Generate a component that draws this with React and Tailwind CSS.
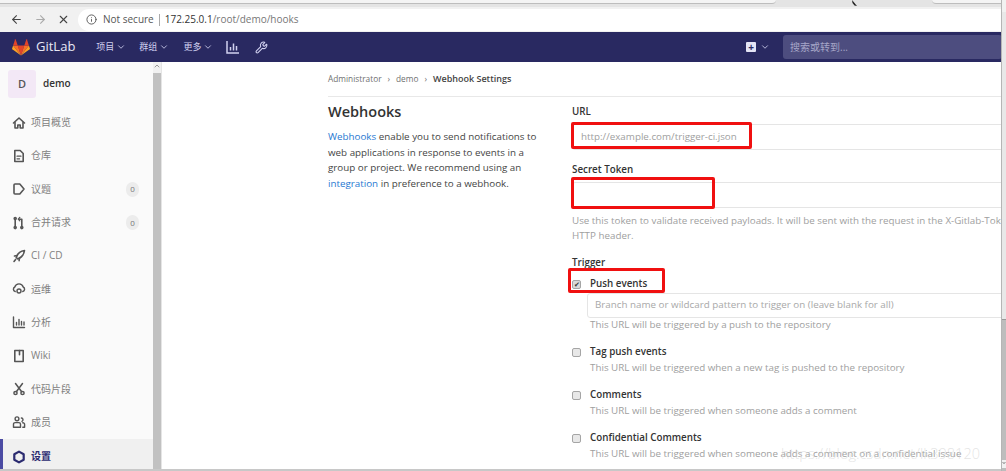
import React from "react";
import { ArrowLeft, ArrowRight, X, Info, ChevronDown, Wrench, ChevronUp } from "lucide-react";

const font = { fontFamily: '"Open Sans", "Noto Sans CJK SC", sans-serif' };

// gitlab's sidebar icons are heavier than lucide's, so they are drawn here
function Icon({ children, color = "#555", width = 1.6 }) {
  return (
    <svg width="14" height="14" viewBox="0 0 14 14" fill="none" stroke={color} strokeWidth={width} strokeLinejoin="round" strokeLinecap="round">
      {children}
    </svg>
  );
}

function Tanuki() {
  return (
    <svg width="18" height="17" viewBox="0 0 36 34">
      <path d="M18 33 24.6 12.8H11.4z" fill="#e24329" />
      <path d="M18 33 11.4 12.8H2.2z" fill="#fc6d26" />
      <path d="M2.2 12.8.2 19a1.4 1.4 0 0 0 .5 1.5L18 33z" fill="#fca326" />
      <path d="M2.2 12.8h9.2L7.4 1a.7.7 0 0 0-1.3 0z" fill="#e24329" />
      <path d="M18 33 24.6 12.8h9.2z" fill="#fc6d26" />
      <path d="M33.8 12.8l2 6.2a1.4 1.4 0 0 1-.5 1.5L18 33z" fill="#fca326" />
      <path d="M33.8 12.8h-9.2L28.6 1a.7.7 0 0 1 1.3 0z" fill="#e24329" />
    </svg>
  );
}

const navItems = [
  {
    label: "项目概览",
    icon: <Icon><path d="M1.5 7 7 2l5.5 5" /><path d="M3 6.5V12h2.8V9h2.4v3H11V6.5" /></Icon>,
  },
  {
    label: "仓库",
    icon: <Icon><path d="M2.8 1.5h5.4l3 3v8h-8.4z" /><path d="M5 7.2h4M5 9.8h2.6" strokeWidth="1.2" /></Icon>,
  },
  {
    label: "议题",
    icon: <Icon><path d="M7.8 2H3a1 1 0 0 0-1 1v8a1 1 0 0 0 1 1h4.8l4.2-5z" /></Icon>,
  },
  {
    label: "合并请求",
    icon: <Icon><path d="M3.2 3.5v7.5M9.8 5v6M7.6 3.2h2.2V5" /><path d="M7.8 1.5 6.2 3.2l1.6 1.6" strokeWidth="1.2" /><circle cx="3.2" cy="2.6" r="1" /><circle cx="3.2" cy="11.6" r="1" /><circle cx="9.8" cy="11.6" r="1" /></Icon>,
  },
  {
    label: "CI / CD",
    icon: <Icon><path d="M12.5 1.5C9 2 5.5 4.5 4.2 8.5l1.6 1.4c3.8-1.4 6.2-4.8 6.7-8.4z" /><path d="M5.2 6.5 2.5 7M7.5 9l-.4 2.6M3.6 10.4l-1.6 2" /></Icon>,
  },
  {
    label: "运维",
    icon: <Icon width={1.4}><path d="M3.2 9.5A2.4 2.4 0 0 1 2.8 5a4.4 4.4 0 0 1 8.4 0 2.4 2.4 0 0 1-.4 4.5" /><circle cx="7" cy="9" r="2" /></Icon>,
  },
  {
    label: "分析",
    icon: <Icon width={1.4}><path d="M1.5 2v10.5h11M4.5 7.5v2.5M7 4.5V10M9.5 6.5V10M12 7v3" /></Icon>,
  },
  {
    label: "Wiki",
    icon: <Icon><path d="M2.8 1.5h8.4v11H2.8z" /><path d="M7.5 1.5v4.2" /></Icon>,
  },
  {
    label: "代码片段",
    icon: <Icon width={1.5}><path d="M3.5 1.5 9.5 9.5M10.5 1.5 4.5 9.5" /><circle cx="3.5" cy="11" r="1.6" /><circle cx="10.5" cy="11" r="1.6" /></Icon>,
  },
  {
    label: "成员",
    icon: <Icon width={1.4}><circle cx="5" cy="3.8" r="1.9" /><path d="M1.5 12.2V9.2a1.6 1.6 0 0 1 1.6-1.6h3.8a1.6 1.6 0 0 1 1.6 1.6v3z" /><path d="M9.4 3a1.8 1.8 0 0 1 .6 3.4M10.8 12.2h1.8V9.4a1.6 1.6 0 0 0-1.8-1.6" /></Icon>,
  },
];

function Sidebar() {
  return (
    <div className="w-[153px] shrink-0 bg-[#fafafa] flex flex-col">
      <div className="flex items-center gap-[7px] pl-2 h-[44px]">
        <div className="w-[28px] h-[28px] rounded-[3px] bg-[#f3e8f6] flex items-center justify-center text-[11px] font-semibold text-[#555]">D</div>
        <span className="text-[10px] font-semibold text-[#333]">demo</span>
      </div>
      {navItems.map((item, i) => (
        <div key={item.label} className="h-[33.4px] flex items-center pl-3 pr-[14px]">
          <span className="w-[14px] flex justify-center">{item.icon}</span>
          <span className="ml-[5px] text-[10px] text-[#808080] flex-1">{item.label}</span>
          {(i === 2 || i === 3) && (
            <span className="w-[13px] h-[15px] rounded-full bg-[#ececec] text-[8px] text-[#777] flex items-center justify-center">0</span>
          )}
        </div>
      ))}
      <div className="h-[30px] flex items-center pl-[9px] pt-[5px] border-l-[3px] border-[#4b4ba3] bg-[#f0f0f0] text-[#2b2b70]">
        <span className="w-[14px] flex justify-center">
          <Icon color="#2b2b70" width={2.2}><path d="M7 1.6 11.7 4.3v5.4L7 12.4 2.3 9.7V4.3z" /></Icon>
        </span>
        <span className="ml-[5px] text-[10px] font-bold">设置</span>
      </div>
    </div>
  );
}

function SubCheck({ label, help, checked, className }) {
  return (
    <div className={className}>
      <div className="flex items-center h-[15px]">
        <span className={"w-[9px] h-[9px] rounded-[2px] border border-[#a5a5a5] flex items-center justify-center text-[7px] leading-none " + (checked ? "bg-[#d8d8d8] text-[#333]" : "bg-[#e8e8e8]")}>{checked ? "✔" : ""}</span>
        <span className="ml-[9px] text-[9.8px] font-semibold text-[#333]">{label}</span>
      </div>
      {help && <p className="ml-[18px] text-[9.8px] leading-[15px] text-[#a0a0a0] whitespace-nowrap">{help}</p>}
    </div>
  );
}

function Form() {
  return (
    <div className="flex-1 min-w-0 pt-[7px]">
      <div className="text-[9.8px] font-semibold text-[#333] leading-[15px]">URL</div>
      <div className="mt-[5px] h-[26px] border border-[#e5e5e5] rounded-l-[3px] flex items-center pl-[8px] text-[9.8px] text-[#a0a0a0]">http://example.com/trigger-ci.json</div>
      <div className="mt-[12px] text-[9.8px] font-semibold text-[#333] leading-[15px]">Secret Token</div>
      <div className="mt-[5px] h-[26px] border border-[#e5e5e5] rounded-l-[3px]"></div>
      <p className="mt-[5px] text-[9.8px] leading-[15px] text-[#a0a0a0] whitespace-nowrap">Use this token to validate received payloads. It will be sent with the request in the X-Gitlab-Token<br />HTTP header.</p>
      <div className="mt-[12px] text-[9.8px] font-semibold text-[#333] leading-[15px]">Trigger</div>
      <SubCheck className="mt-[7px]" label="Push events" checked />
      <div className="ml-[15px] mt-[1px] h-[25px] border border-[#e5e5e5] rounded-l-[3px] flex items-center pl-[7px] text-[9.8px] text-[#a8a8a8] whitespace-nowrap">Branch name or wildcard pattern to trigger on (leave blank for all)</div>
      <p className="ml-[18px] -mt-[1px] text-[9.8px] leading-[15px] text-[#a0a0a0] whitespace-nowrap">This URL will be triggered by a push to the repository</p>
      <SubCheck className="mt-[13px]" label="Tag push events" help="This URL will be triggered when a new tag is pushed to the repository" />
      <SubCheck className="mt-[13px]" label="Comments" help="This URL will be triggered when someone adds a comment" />
      <SubCheck className="mt-[13px]" label="Confidential Comments" help="This URL will be triggered when someone adds a comment on a confidential issue" />
    </div>
  );
}

export default function App() {
  return (
    <div style={font} className="relative w-[1006px] h-[471px] overflow-hidden bg-white flex flex-col">
      {/* browser chrome */}
      <div className="h-[7px] bg-[#e4e4e4] shrink-0 flex">
        <div className="w-[776px] h-[4px] bg-[#f4f4f4] border-b border-[#bdbdbd] rounded-br-[6px]"></div>
        <div className="ml-auto w-[74px] h-[4px] bg-[#f4f4f4] border-b border-[#bdbdbd] rounded-bl-[6px]"></div>
      </div>
      <div className="h-[25px] bg-[#f1f1f1] flex items-center pl-[10px] shrink-0 text-[#444]">
        <ArrowLeft size={13} strokeWidth={2} />
        <ArrowRight size={13} strokeWidth={2} className="ml-[11px] text-[#aaa]" />
        <X size={13} strokeWidth={2} className="ml-[10px]" />
        <div className="ml-[8px] flex-1 h-[22px] bg-white rounded-l-full flex items-center pl-2 text-[10px] text-[#555]">
          <Info size={11} strokeWidth={2} />
          <span className="ml-[6px] whitespace-nowrap">Not secure</span>
          <span className="mx-[5px] w-px h-[12px] bg-[#aaa]"></span>
          <span className="text-[#333] whitespace-nowrap">172.25.0.1<span className="text-[#777]">/root/demo/hooks</span></span>
        </div>
      </div>
      {/* gitlab navbar */}
      <div className="h-[30px] bg-[#292961] flex items-center pl-3 shrink-0 pr-[4px] text-[#d1d1f0]">
        <Tanuki />
        <span className="ml-[6px] text-[13px] text-[#e8e8f5]">GitLab</span>
        {["项目", "群组", "更多"].map((t, i) => (
          <span key={t} className={"flex items-center text-[9px] " + (i === 0 ? "ml-[21px]" : i === 1 ? "ml-[13px]" : "ml-[14px]")}>
            {t}<ChevronDown size={10} className="ml-[2px]" />
          </span>
        ))}
        <svg width="14" height="14" viewBox="0 0 14 14" fill="none" stroke="currentColor" strokeWidth="1.5" className="ml-[13px]">
          <path d="M1 1v12h12M4.5 7v3.5M7.5 3.5v7M10.5 6v4.5" />
        </svg>
        <Wrench size={13} className="ml-[15px]" />
        <span className="ml-auto w-[10px] h-[10px] rounded-[1px] bg-[#e4e4f5] text-[#292961] text-[10px] leading-[10px] text-center font-bold">+</span>
        <ChevronDown size={10} className="ml-[4px]" />
        <div className="ml-[13px] w-[219px] h-[24px] rounded-[3px] bg-[#4d4d7f] flex items-center pl-[7px] text-[10px] text-[#a6a6c8]">搜索或转到...</div>
      </div>
      {/* page body */}
      <div className="flex-1 min-h-0 flex">
        <Sidebar />
        <div className="w-[9px] shrink-0 bg-[#c1c1c1] border-r border-[#e5e5e5] relative">
          <div className="absolute top-0 left-0 right-0 h-[11px] bg-[#f1f1f1] flex justify-center text-[#999]"><ChevronUp size={8} strokeWidth={3} /></div>
        </div>
        <div className="flex-1 min-w-0 pl-[166px]">
          <div className="h-[35px] border-b border-[#e8e8e8] flex items-center text-[8.3px] text-[#707070]">
            Administrator<span className="mx-[6px]">›</span>demo<span className="mx-[6px]">›</span><span className="text-[9px] font-semibold text-[#444]">Webhook Settings</span>
          </div>
          <div className="flex">
            <div className="w-[244px] shrink-0 pt-[5px]">
              <h1 className="text-[14.5px] leading-[20px] font-semibold text-[#333]">Webhooks</h1>
              <p className="mt-[7px] text-[9.8px] leading-[15.5px] text-[#444] w-[220px]">
                <span className="text-[#1f78d1]">Webhooks</span> enable you to send notifications to web applications in response to events in a group or project. We recommend using an <span className="text-[#1f78d1]">integration</span> in preference to a webhook.
              </p>
            </div>
            <Form />
          </div>
        </div>
      </div>
      <div className="h-[2px] bg-[#c8c8c8] shrink-0"></div>
      {/* page scrollbar */}
      <div className="absolute top-0 right-0 bottom-0 w-[5px] border-l border-[#b5b5b5] bg-[#bdbdbd] flex flex-col">
        <div className="h-[12px] bg-[#f1f1f1]"></div>
        <div className="h-[308px] bg-[#e8e8e8] border-b border-[#999]"></div>
        <div className="mt-auto mb-[3px] h-[8px] bg-[#f1f1f1] text-[#222] flex justify-center"><ChevronDown size={6} strokeWidth={4} /></div>
      </div>
      {/* red annotation boxes */}
      <div className="absolute left-[571px] top-[122px] w-[181px] h-[27px] border-[3px] border-[#f01010] rounded-[2px]"></div>
      <div className="absolute left-[571px] top-[177px] w-[144px] h-[32px] border-[3px] border-[#f01010] rounded-[2px]"></div>
      <div className="absolute left-[568px] top-[268px] w-[97px] h-[25px] border-[3px] border-[#f01010] rounded-[2px]"></div>
      {/* mouse pointer poking in at the top */}
      <svg width="10" height="7" viewBox="0 0 10 7" className="absolute left-[851px] top-0">
        <path d="M1 0 6 6 3.5 5.5 1.5 3z" fill="#222" />
      </svg>
      {/* watermark */}
      <div className="absolute left-[781px] top-[443px] text-[14.5px] font-light text-[#d8d8d8]/70 whitespace-nowrap">https://blog.csdn.net/lk398120</div>
    </div>
  );
}
